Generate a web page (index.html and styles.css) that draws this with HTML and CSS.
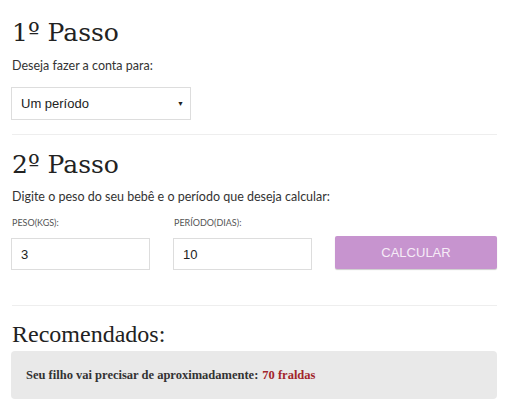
FILE: index.html
```html
<!DOCTYPE html>
<html lang="pt-BR">
  <head>
    <meta charset="UTF-8" />
    <meta name="viewport" content="width=device-width, initial-scale=1.0" />
    <title>Calculadora de Fraldas</title>
    <link rel="stylesheet" href="styles.css">
  </head>
  <body>
    <div class="container">
      <!-- Passo 1 -->
      <div class="step">
        <h1 class="step-title">1º Passo</h1>
        <p class="step-text">Deseja fazer a conta para:</p>
        <div class="select-box">
          <span>Um período</span>
          <span class="arrow">▼</span>
        </div>
      </div>

      <hr class="divider" />

      <!-- Passo 2 -->
      <div class="step">
        <h1 class="step-title step-title-2">2º Passo</h1>
        <p class="step-text">Digite o peso do seu bebê e o período que deseja calcular:</p>
        <div class="fields">
          <div class="field">
            <label class="field-label">PESO(KGS):</label>
            <div class="input-field">3</div>
          </div>
          <div class="field">
            <label class="field-label">PERÍODO(DIAS):</label>
            <div class="input-field">10</div>
          </div>
          <button type="button" class="calc-button">CALCULAR</button>
        </div>
      </div>

      <hr class="divider divider-low" />

      <!-- Resultado -->
      <h2 class="result-title">Recomendados:</h2>
      <div class="result-box">
        Seu filho vai precisar de aproximadamente: <span class="result-value">70 fraldas</span>
      </div>
    </div>
  </body>
</html>
```

FILE: styles.css
```css
body {
  margin: 0;
  padding: 0;
  background-color: #fff;
  font-family: "Lato", sans-serif;
  color: #333;
}

.container {
  width: 486px;
  padding: 0 15px 0 11px;
}

.step-title {
  font-family: "DejaVu Serif", serif;
  font-weight: normal;
  font-size: 25px;
  line-height: 30px;
  color: #222;
  margin: 18px 0 0 1px;
}

.step-title-2 {
  margin-top: 15px;
}

.step-text {
  font-size: 12.5px;
  line-height: 16px;
  margin: 10px 0 0 1px;
  color: #333;
}

.step-title-2 + .step-text {
  margin-top: 9px;
}

.select-box {
  margin-top: 13px;
  border: 1px solid #ddd;
  display: flex;
  align-items: center;
  justify-content: space-between;
  padding: 0 6px 0 9px;
  box-sizing: border-box;
  width: 180px;
  height: 33px;
  font-family: "Liberation Sans", Arial, sans-serif;
  font-size: 13px;
  color: #222;
}

.arrow {
  font-size: 7px;
  color: #222;
}

.divider {
  border: none;
  border-top: 1px solid #eee;
  margin: 14px 0 0 1px;
}

.divider-low {
  margin-top: 35px;
}

.fields {
  display: grid;
  grid-template-columns: 139px 139px 1fr;
  column-gap: 23px;
  margin-top: 12px;
  align-items: end;
}

.field-label {
  display: block;
  font-size: 9px;
  line-height: 11px;
  color: #555;
  margin: 0 0 10px 1px;
}

.input-field {
  height: 32px;
  border: 1px solid #ddd;
  box-sizing: border-box;
  padding: 0 9px;
  display: flex;
  align-items: center;
  font-family: "Liberation Sans", Arial, sans-serif;
  font-size: 13px;
  color: #222;
}

.calc-button {
  height: 33px;
  margin-bottom: 1px;
  background-color: #c794cf;
  border: none;
  border-radius: 2px;
  box-shadow: 0 1px 1px rgba(0, 0, 0, 0.2);
  color: #f6ecf7;
  font-family: "Liberation Sans", Arial, sans-serif;
  font-size: 13px;
}

.result-title {
  font-family: "Liberation Serif", serif;
  font-weight: normal;
  font-size: 24px;
  line-height: 28px;
  color: #222;
  margin: 14px 0 0 1px;
}

.result-box {
  margin-top: 3px;
  background-color: #e9e9e9;
  border-radius: 4px;
  height: 48px;
  box-sizing: border-box;
  padding: 0 15px;
  display: flex;
  align-items: center;
  font-family: "Liberation Serif", serif;
  font-weight: bold;
  font-size: 12.5px;
  color: #333;
}

.result-value {
  color: #a2262b;
  margin-left: 4px;
}
```
